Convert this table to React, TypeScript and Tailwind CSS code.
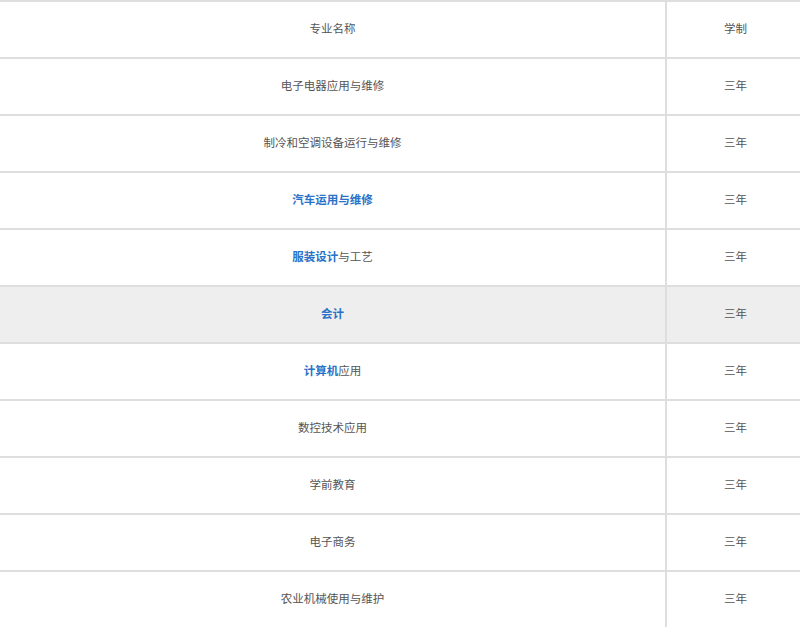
const rows: { name: React.ReactNode; years: string; active?: boolean }[] = [
  { name: '电子电器应用与维修', years: '三年' },
  { name: '制冷和空调设备运行与维修', years: '三年' },
  { name: <b className="font-bold text-[#2a72c8]">汽车运用与维修</b>, years: '三年' },
  { name: <><b className="font-bold text-[#2a72c8]">服装设计</b>与工艺</>, years: '三年' },
  { name: <b className="font-bold text-[#2a72c8]">会计</b>, years: '三年', active: true },
  { name: <><b className="font-bold text-[#2a72c8]">计算机</b>应用</>, years: '三年' },
  { name: '数控技术应用', years: '三年' },
  { name: '学前教育', years: '三年' },
  { name: '电子商务', years: '三年' },
  { name: '农业机械使用与维护', years: '三年' },
];

function Row({ name, years, active }: { name: React.ReactNode; years: string; active?: boolean }) {
  return (
    <div className={`grid grid-cols-[665px_1fr] border-t-2 border-[#dedede] ${active ? 'bg-[#eeeeee]' : 'bg-white'}`}>
      <div className="h-[55px] flex items-center justify-center pb-[2px]">{name}</div>
      <div className="h-[55px] flex items-center justify-center border-l-2 border-[#dedede] pl-1 pb-[2px]">{years}</div>
    </div>
  );
}

export default function App() {
  return (
    <div
      className="w-[800px] h-[627px] overflow-hidden bg-white text-[11.5px] text-[#555]"
      style={{ fontFamily: '"Noto Sans CJK SC", "Microsoft YaHei", sans-serif' }}
    >
      <Row name="专业名称" years="学制" />
      {rows.map((r, i) => (
        <Row key={i} {...r} />
      ))}
    </div>
  );
}
